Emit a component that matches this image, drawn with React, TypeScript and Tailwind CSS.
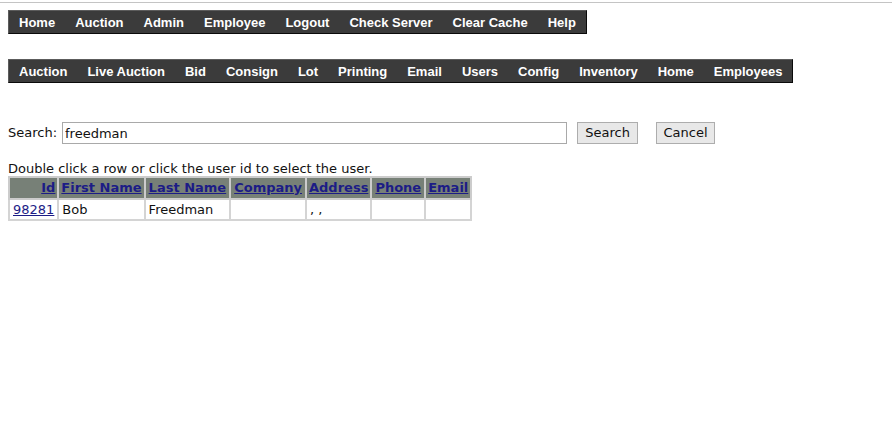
import React from "react";

const topMenu = ["Home", "Auction", "Admin", "Employee", "Logout", "Check Server", "Clear Cache", "Help"];
const subMenu = ["Auction", "Live Auction", "Bid", "Consign", "Lot", "Printing", "Email", "Users", "Config", "Inventory", "Home", "Employees"];
const columns = [
  { label: "Id", cls: "w-[49px] px-[2px] text-right" },
  { label: "First Name", cls: "px-[2px] text-left" },
  { label: "Last Name", cls: "px-[3px] text-left" },
  { label: "Company", cls: "px-[3px] text-left" },
  { label: "Address", cls: "px-[2px] text-left" },
  { label: "Phone", cls: "px-[3px] text-left" },
  { label: "Email", cls: "px-[2px] text-left" },
];

function MenuBar({ items }: { items: string[] }) {
  return (
    <div className="inline-flex h-[24px] items-center border border-t-[#5c5c5c] border-l-[#5c5c5c] border-b-[#0a0a0a] border-r-[#0a0a0a] bg-[#3b3b3b]">
      {items.map((item) => (
        <a
          key={item}
          className="whitespace-nowrap px-[10px] font-['Liberation_Sans',Arial,sans-serif] text-[13px] font-bold leading-none text-white"
        >
          {item}
        </a>
      ))}
    </div>
  );
}

export default function App() {
  return (
    <div className="min-h-[436px] bg-white font-['DejaVu_Sans',Verdana,sans-serif] text-[13px] text-[#111]">
      <div className="h-[2px]" />
      <div className="h-px bg-[#c4c4c4]" />

      <div className="px-2 pt-[7px]">
        <MenuBar items={topMenu} />
      </div>
      <div className="px-2 pt-[25px]">
        <MenuBar items={subMenu} />
      </div>

      <div className="flex items-center px-2 pt-[39px]">
        <span>Search:</span>
        <input
          defaultValue="freedman"
          className="ml-[5px] h-[22px] w-[505px] border border-[#a9a9a9] px-[2px] text-[13px] outline-none"
        />
        <button className="ml-[10px] h-[22px] w-[61px] border border-[#adadad] bg-[#e8e8e8] text-[13px]">Search</button>
        <button className="ml-[18px] h-[22px] w-[59px] border border-[#adadad] bg-[#e8e8e8] text-[13px]">Cancel</button>
      </div>

      <div className="px-2 pt-[17px] leading-[15px]">Double click a row or click the user id to select the user.</div>

      <div className="px-2">
        <table className="border-collapse">
          <thead>
            <tr className="bg-[#778077]">
              {columns.map((c) => (
                <th key={c.label} className={`h-[19px] border-2 border-[#cccccc] py-0 font-bold ${c.cls}`}>
                  <a className="text-[#1c1c86] underline">{c.label}</a>
                </th>
              ))}
            </tr>
          </thead>
          <tbody>
            <tr>
              <td className="h-[19px] border-2 border-[#d4d4d4] px-[3px] text-right">
                <a className="text-[#1c1c86] underline">98281</a>
              </td>
              <td className="border-2 border-[#d4d4d4] px-[3px]">Bob</td>
              <td className="border-2 border-[#d4d4d4] px-[3px]">Freedman</td>
              <td className="border-2 border-[#d4d4d4] px-[3px]"></td>
              <td className="border-2 border-[#d4d4d4] px-[3px]">, ,</td>
              <td className="border-2 border-[#d4d4d4] px-[3px]"></td>
              <td className="border-2 border-[#d4d4d4] px-[3px]"></td>
            </tr>
          </tbody>
        </table>
      </div>
    </div>
  );
}
